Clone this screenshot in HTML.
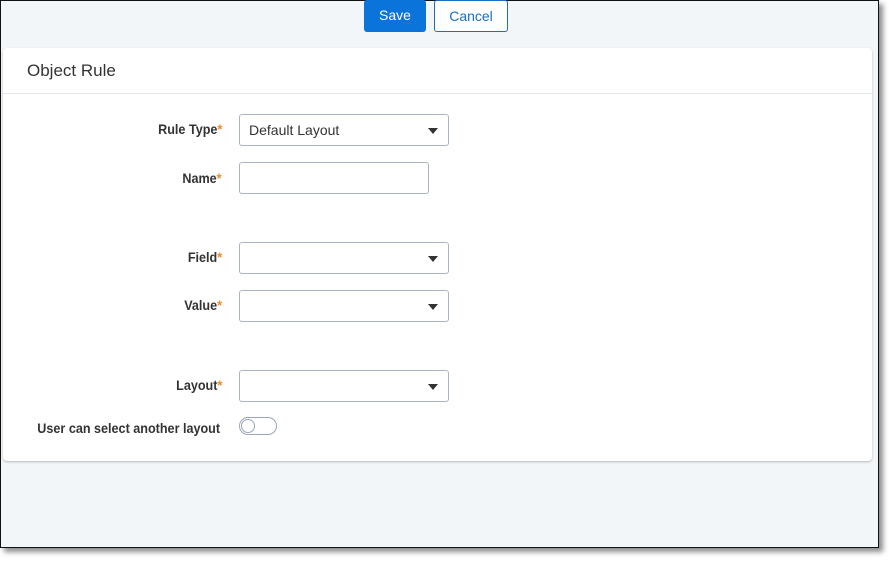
<!DOCTYPE html>
<html><head><style>
body{margin:0;width:889px;height:564px;background:#fff;position:relative;overflow:hidden;font-family:"Liberation Sans",sans-serif;}
.frame{position:absolute;left:0;top:0;width:877px;height:546px;border:1px solid #111;border-top-width:1px;background:#f2f6f9;box-shadow:4px 4px 5px rgba(0,0,0,.45);}
.btn{position:absolute;top:0;height:32px;border-radius:3px;font-size:14px;line-height:31px;text-align:center;box-sizing:border-box;}
.save{left:364px;width:62px;background:#0a74da;color:#fff;}
.cancel{left:434px;width:74px;border:1px solid #1a6fc4;background:#fff;color:#1a6fc4;}
.card{position:absolute;left:3px;top:48px;width:869px;height:413px;background:#fff;border-radius:4px;box-shadow:0 1px 2px rgba(0,0,0,.25);}
.title{position:absolute;left:24px;top:13px;font-size:17px;color:#333;}
.hr{position:absolute;left:0;right:0;top:45px;border-top:1px solid #e2e6ea;}
.lbl{position:absolute;right:650px;font-size:14px;color:#333;font-weight:bold;transform:scaleX(.9);transform-origin:right;}
.lbl b{color:#f08a24;}
.inp{position:absolute;left:236px;width:210px;height:32px;border:1px solid #aab4c4;border-radius:3px;box-sizing:border-box;font-size:14px;color:#333;padding-left:9px;line-height:30px;}
.inp i{position:absolute;right:10px;top:13px;border-left:5px solid transparent;border-right:5px solid transparent;border-top:6px solid #333;}
.tog{position:absolute;left:236px;top:369px;width:38px;height:18px;border:1px solid #9aa6ba;border-radius:10px;box-sizing:border-box;}
.tog:before{content:"";position:absolute;left:1px;top:1px;width:14px;height:14px;border:1px solid #9aa6ba;border-radius:50%;box-sizing:border-box;}
</style></head><body>
<div class="frame"></div>
<div class="btn save">Save</div>
<div class="btn cancel">Cancel</div>
<div class="card">
<div class="title">Object Rule</div>
<div class="hr"></div>
<div class="lbl" style="top:73px">Rule Type<b>*</b></div>
<div class="inp" style="top:66px">Default Layout<i></i></div>
<div class="lbl" style="top:122px">Name<b>*</b></div>
<div class="inp" style="top:114px;width:190px"></div>
<div class="lbl" style="top:201px">Field<b>*</b></div>
<div class="inp" style="top:194px"><i></i></div>
<div class="lbl" style="top:249px">Value<b>*</b></div>
<div class="inp" style="top:242px"><i></i></div>
<div class="lbl" style="top:329px">Layout<b>*</b></div>
<div class="inp" style="top:322px"><i></i></div>
<div class="lbl" style="top:372px;right:652px">User can select another layout</div>
<div class="tog"></div>
</div>
</body></html>
